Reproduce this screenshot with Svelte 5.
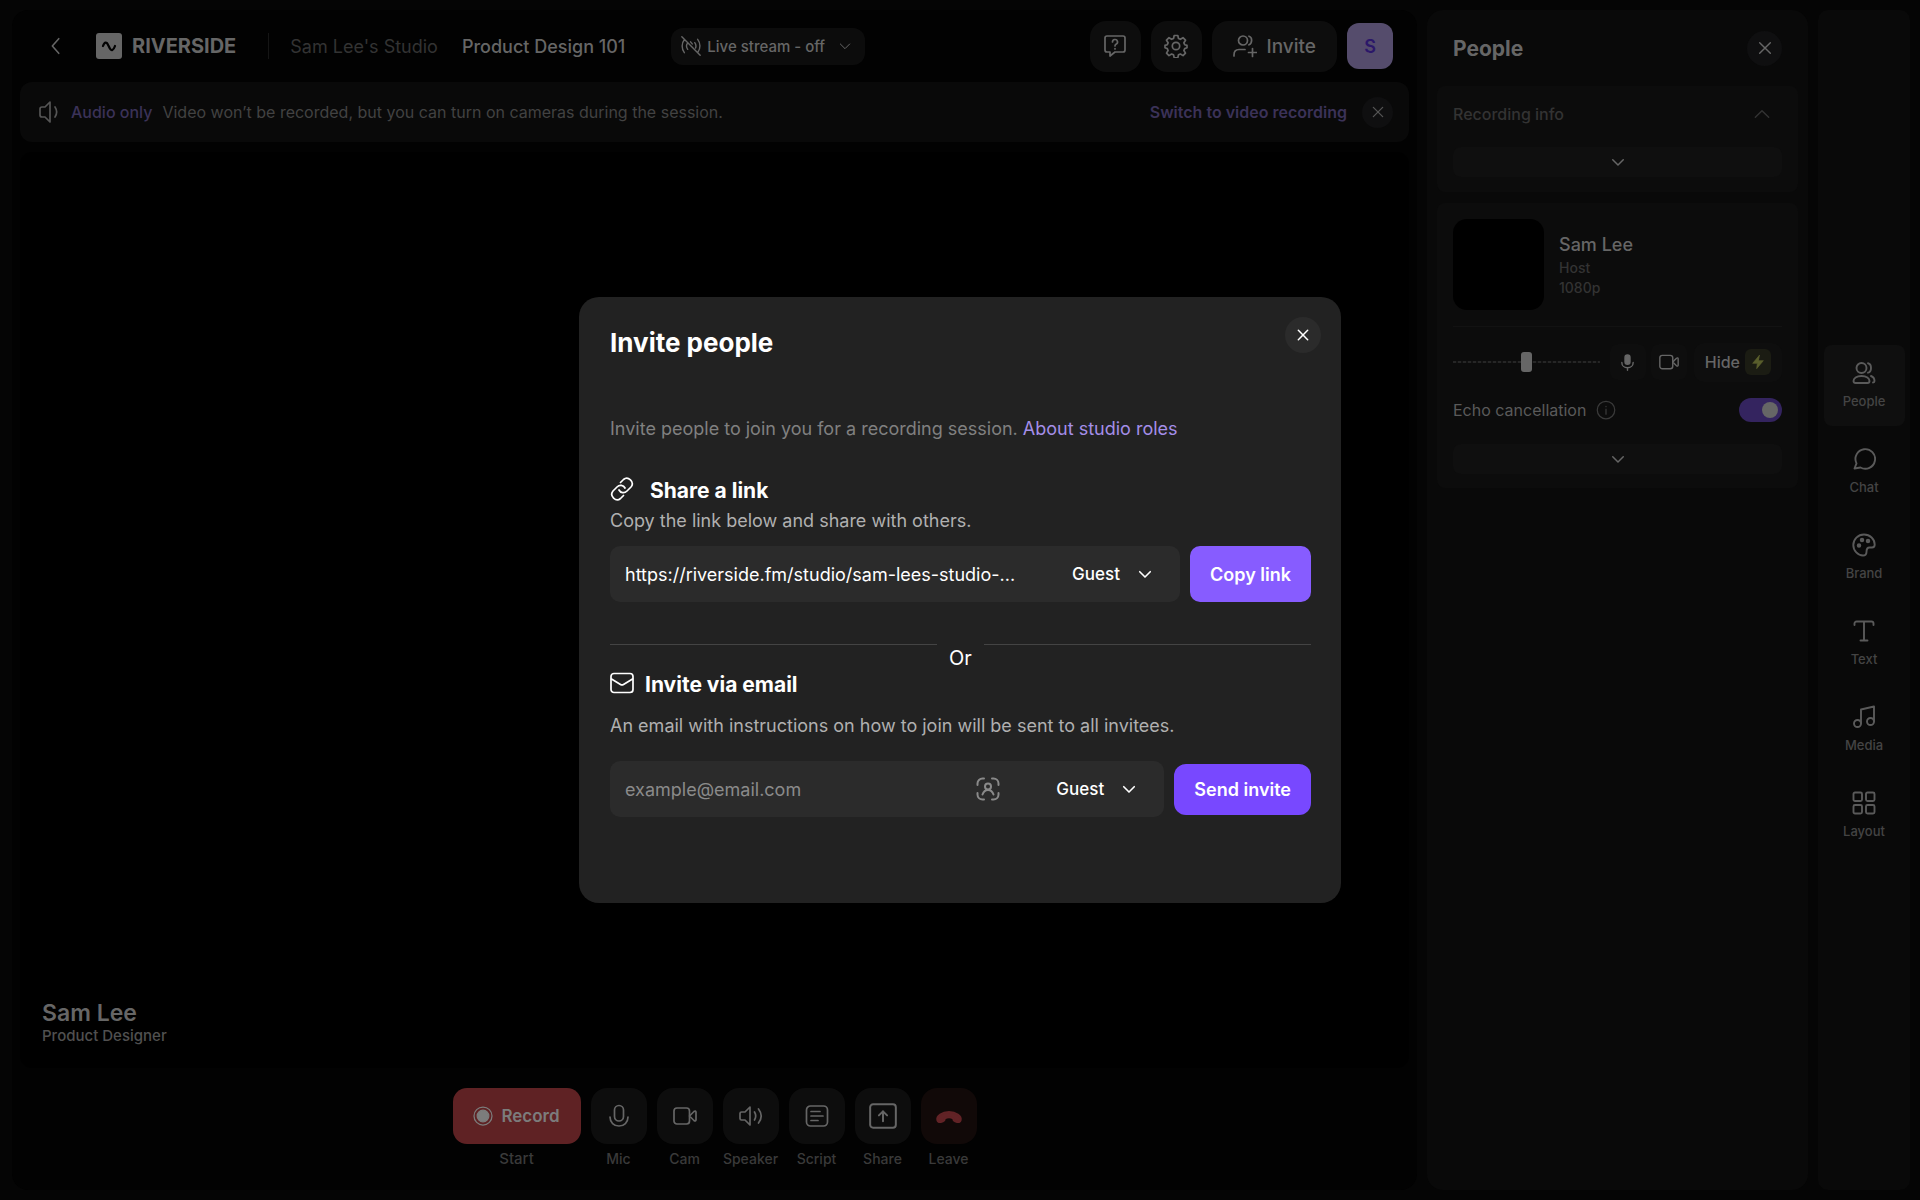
<script>
  const icons = {
    back: `<path d="M15 4l-7 8 7 8"/>`,
    down: `<path d="M5 9l7 7 7-7"/>`,
    up: `<path d="M4 16l8-8 8 8"/>`,
    close: `<path d="M4 4l16 16M20 4L4 20"/>`,
    wave: `<path d="M4 12c2-6 5-6 7-1l2 4c2 4 5 3 7-3"/>`,
    streamOff: `<path d="M1 1l22 22M4 4.500c-3.500 4-3.500 11 0 15.500M20.500 19c3-4 3-10.500-.5-15M8 8.500c-1.700 2-1.700 5 0 7.500M16.500 8c1.500 2 1.700 4.500 1 6.500M11.500 7l2 2.500"/>`,
    help: `<path d="M4 2h16a2 2 0 0 1 2 2v12a2 2 0 0 1-2 2h-8l-5 4v-4H4a2 2 0 0 1-2-2V4a2 2 0 0 1 2-2z"/><path d="M9.500 8a2.500 2.500 0 1 1 3.500 2.300c-.7.4-1 .8-1 1.700"/><path d="M12 14.500v.5"/>`,
    gear: `<circle cx="12" cy="12" r="3.700"/><path d="M10.200 1.500h3.600l.7 3 1.900.8 2.600-1.600 2.500 2.500-1.600 2.600.8 1.900 2.300.7v2.400l-2.300.8-.8 1.900 1.600 2.600-2.500 2.500-2.600-1.600-1.900.8-.7 3h-3.600l-.7-3-1.900-.8L5 21.600l-2.500-2.500 1.600-2.600-.8-1.900-2.300-.8v-2.400l2.300-.7.8-1.900L2.500 6.200 5 3.700l2.600 1.600 1.900-.8z"/>`,
    invite: `<circle cx="10" cy="6.500" r="4.500"/><path d="M16 2.200c3.500 1 3.500 7 0 8.600M1 22v-1c0-3.500 2-5.500 5-5.500h6M19.500 14.500v8M15.500 18.500h8"/>`,
    people: `<circle cx="9.500" cy="7" r="5"/><path d="M16 2.300c4 .8 4 8.400 0 9.400M1.500 20c0-2.500 3-5 8-5s8 2.500 8 5c0 1.500-.8 2-2 2h-12c-1.200 0-2-.5-2-2zM19 15c2.500 1 3.500 3 3.500 5 0 1-.5 1.500-1.500 1.500"/>`,
    chat: `<path d="M2.500 21.500l2-5.200A9.800 9.800 0 1 1 8.500 20.500z"/>`,
    brand: `<path d="M12 1.500C6 1.500 1.300 6.200 1.300 12S6 22.500 11 22.500c2.500 0 3.500-1.500 3.500-3.500 0-3 .5-4.500 3-4.500h2.500c2 0 2.700-1 2.700-3C22.700 6 18 1.500 12 1.500z"/><circle cx="7" cy="12.500" r="1.300" fill="currentColor"/><circle cx="10" cy="7" r="1.300" fill="currentColor"/><circle cx="16" cy="8" r="1.300" fill="currentColor"/>`,
    text: `<path d="M2.500 6V4.500A2 2 0 0 1 4.500 2.500h15a2 2 0 0 1 2 2V6M12 2.500v19M8.500 21.500h7"/>`,
    media: `<circle cx="5.500" cy="18.500" r="3.500"/><circle cx="18.500" cy="16.500" r="3.500"/><path d="M9 18.500V4.500L22 1.500v15"/>`,
    layout: `<rect x="1.500" y="1.500" width="8.500" height="8.500" rx="1.500"/><rect x="14" y="1.500" width="8.500" height="8.500" rx="1.500"/><rect x="1.500" y="14" width="8.500" height="8.500" rx="1.500"/><rect x="14" y="14" width="8.500" height="8.500" rx="1.500"/>`,
    volume: `<path d="M12 2L7 7H4a2 2 0 0 0-2 2v6a2 2 0 0 0 2 2h3l5 5zM17 7c2 3 2 7 0 10"/>`,
    mic: `<rect x="7.500" y="1.500" width="9" height="15.500" rx="4.500"/><path d="M3 13c0 5.500 4 9 9 9s9-3.500 9-9"/>`,
    micSmall: `<rect x="8.500" y="1.500" width="7" height="13" rx="3.500" fill="currentColor"/><path d="M4 12c0 4.500 3.500 7.500 8 7.500s8-3 8-7.500M12 19.500V23"/>`,
    cam: `<rect x="1" y="4" width="15.500" height="16" rx="3"/><path d="M16.500 12l4.500-4.500c1-.8 2-.5 2 .8v7.400c0 1.300-1 1.600-2 .8z"/>`,
    speaker: `<path d="M11 3L6 8H2.500a1.500 1.500 0 0 0-1.500 1.500v5A1.500 1.500 0 0 0 2.500 16H6l5 5zM15.500 8c1.500 2.500 1.500 5.500 0 8M19.500 5c3.500 4.500 3.500 9.500 0 14"/>`,
    script: `<rect x="1.500" y="2" width="21" height="20" rx="4"/><path d="M6 7.500h9M6 12h12M6 16.500h7"/>`,
    share: `<rect x="1" y="2" width="22" height="20" rx="2.500"/><path d="M12 16.500V8M8.500 11.500L12 8l3.500 3.500"/>`,
    leave: `<path d="M2 15.500c-.8-3.500 4-7 10-7s10.800 3.500 10 7c-.3 1.600-1.500 2-3 1.600l-1.800-.5c-1.200-.4-1.500-1-1.700-2.600-2-1-5-1-7 0-.2 1.600-.5 2.200-1.700 2.600L5 17.100c-1.500.4-2.700 0-3-1.600z" fill="currentColor"/>`,
    record: `<circle cx="12" cy="12" r="10.800"/><circle cx="12" cy="12" r="7" fill="currentColor"/>`,
    info: `<circle cx="12" cy="12" r="10.500"/><path d="M12 11v6M12 7.500V8"/>`,
    bolt: `<path d="M14 2L4 14h7l-1 8 10-12h-7z" fill="currentColor"/>`,
    link: `<path d="M10.500 5.500l3-3c4.500-4 11.500 2.500 7.500 7.500l-4 4c-2.500 2.500-6.500 2-8-1"/><path d="M13.500 18.500l-3 3C6 25.500-1 19 3 14l4-4c2.500-2.500 6.500-2 8 1"/>`,
    mail: `<rect x="1" y="2.500" width="22" height="19" rx="3"/><path d="M1.500 8l9 5.500c1 .6 2 .6 3 0l9-5.500"/>`,
    contact: `<path d="M1.500 8V6.500a5 5 0 0 1 5-5H8M16 1.500h1.500a5 5 0 0 1 5 5V8M22.500 16v1.500a5 5 0 0 1-5 5H16M8 22.500H6.500a5 5 0 0 1-5-5V16"/><circle cx="12" cy="9.500" r="3"/><path d="M6.500 17.500c1-3 3-4.500 5.500-4.500s4.500 1.500 5.500 4.500"/>`,
  };

  const controls = [
    { label: "Mic", icon: "mic" },
    { label: "Cam", icon: "cam" },
    { label: "Speaker", icon: "speaker" },
    { label: "Script", icon: "script" },
    { label: "Share", icon: "share", large: true },
    { label: "Leave", icon: "leave", large: true, danger: true },
  ];

  const tabs = [
    { label: "People", icon: "people" },
    { label: "Chat", icon: "chat" },
    { label: "Brand", icon: "brand" },
    { label: "Text", icon: "text" },
    { label: "Media", icon: "media" },
    { label: "Layout", icon: "layout" },
  ];

  let activeTab = "People";
  let inviteOpen = true;
  let echoCancellation = true;
  let volume = 50;
  let linkRole = "Guest";
  let emailRole = "Guest";
  let email = "";
  const studioLink = "https://riverside.fm/studio/sam-lees-studio-...";

  function copyLink() {
    navigator.clipboard.writeText(studioLink);
  }
</script>

{#snippet icon(name, size, stroke = 1.7)}
  <svg
    width={size}
    height={size}
    viewBox="0 0 24 24"
    fill="none"
    stroke="currentColor"
    stroke-width={stroke}
    stroke-linecap="round"
    stroke-linejoin="round"
    aria-hidden="true">{@html icons[name]}</svg
  >
{/snippet}

<div class="page">
  <main class="studio">
    <header class="topbar">
      <button class="plain back" aria-label="Back">{@render icon("back", 22)}</button>
      <a class="logo" href="/">
        <span class="logo-mark">{@render icon("wave", 18, 3)}</span>
        RIVERSIDE
      </a>
      <a class="studio-name" href="/studio">Sam Lee's Studio</a>
      <h1>Product Design 101</h1>
      <button class="stream">
        {@render icon("streamOff", 20)}
        <span>Live stream - off</span>
        {@render icon("down", 16, 1.5)}
      </button>
      <div class="top-actions">
        <button class="square" aria-label="Help">{@render icon("help", 24)}</button>
        <button class="square" aria-label="Settings">{@render icon("gear", 24)}</button>
        <button class="invite" on:click={() => (inviteOpen = true)}>
          {@render icon("invite", 24)}
          Invite
        </button>
        <button class="avatar">S</button>
      </div>
    </header>

    <div class="banner">
      {@render icon("volume", 24)}
      <strong>Audio only</strong>
      <span>Video won’t be recorded, but you can turn on cameras during the session.</span>
      <a href="/video">Switch to video recording</a>
      <button class="round" aria-label="Dismiss">{@render icon("close", 14, 2.2)}</button>
    </div>

    <section class="stage">
      <h2>Sam Lee</h2>
      <p>Product Designer</p>
    </section>

    <footer class="controls">
      <div class="control">
        <button class="record" id="record">{@render icon("record", 20, 1.5)} Record</button>
        <label class="start" for="record">Start</label>
      </div>
      {#each controls as control}
        <div class="control">
          <button class="tool" class:danger={control.danger} id={control.icon}>
            {@render icon(control.icon, control.large ? 28 : 24)}
          </button>
          <label for={control.icon}>{control.label}</label>
        </div>
      {/each}
    </footer>
  </main>

  <aside class="panel">
    <div class="panel-head">
      <h2>People</h2>
      <button class="round large" aria-label="Close">{@render icon("close", 16, 2.2)}</button>
    </div>

    <section class="card info">
      <button class="plain info-head">
        Recording info
        {@render icon("up", 20)}
      </button>
      <button class="expand" aria-label="Show more">{@render icon("down", 18, 2)}</button>
    </section>

    <section class="card person">
      <div class="profile">
        <div class="thumb"></div>
        <div>
          <h3>Sam Lee</h3>
          <p>Host</p>
          <p>1080p</p>
        </div>
      </div>
      <div class="levels">
        <input type="range" min="0" max="100" bind:value={volume} aria-label="Volume" />
        <button class="small" aria-label="Mute">{@render icon("micSmall", 17, 2)}</button>
        <button class="small" aria-label="Camera">{@render icon("cam", 20)}</button>
        <button class="hide">
          Hide
          <span class="bolt">{@render icon("bolt", 16, 1)}</span>
        </button>
      </div>
      <div class="echo">
        <label for="echo">Echo cancellation</label>
        {@render icon("info", 20, 1.5)}
        <input id="echo" type="checkbox" bind:checked={echoCancellation} />
      </div>
      <button class="expand" aria-label="Show more">{@render icon("down", 18, 2)}</button>
    </section>
  </aside>

  <nav class="rail">
    {#each tabs as tab}
      <button class:active={tab.label === activeTab} on:click={() => (activeTab = tab.label)}>
        {@render icon(tab.icon, 24, 1.9)}
        {tab.label}
      </button>
    {/each}
  </nav>
</div>

{#if inviteOpen}
  <div class="backdrop">
    <div class="modal" role="dialog" aria-modal="true" aria-labelledby="modal-title">
      <div class="modal-head">
        <h2 id="modal-title">Invite people</h2>
        <button aria-label="Close" on:click={() => (inviteOpen = false)}>
          {@render icon("close", 14, 2.6)}
        </button>
      </div>

      <p class="intro">
        Invite people to join you for a recording session.
        <a href="/roles">About studio roles</a>
      </p>

      <h3 class="share-title">{@render icon("link", 24)} Share a link</h3>
      <p>Copy the link below and share with others.</p>
      <div class="row">
        <div class="field">
          <input type="text" readonly value={studioLink} aria-label="Studio link" />
          <div class="role">
            <select bind:value={linkRole} aria-label="Role for link">
              <option>Guest</option>
              <option>Producer</option>
              <option>Audience</option>
            </select>
            {@render icon("down", 18, 2.2)}
          </div>
        </div>
        <button class="copy" on:click={copyLink}>Copy link</button>
      </div>

      <div class="or"><span>Or</span></div>

      <h3 class="email-title">{@render icon("mail", 24)} Invite via email</h3>
      <p>An email with instructions on how to join will be sent to all invitees.</p>
      <div class="row email-row">
        <div class="field">
          <input type="email" placeholder="example@email.com" bind:value={email} aria-label="Email" />
          <button class="plain contact" aria-label="Contacts">{@render icon("contact", 24, 2)}</button>
          <div class="role">
            <select bind:value={emailRole} aria-label="Role for email">
              <option>Guest</option>
              <option>Producer</option>
              <option>Audience</option>
            </select>
            {@render icon("down", 18, 2.2)}
          </div>
        </div>
        <button class="send">Send invite</button>
      </div>
    </div>
  </div>
{/if}

<style>
  :global(body) {
    background: #050505;
  }
  h1,
  h2,
  h3,
  p {
    margin: 0;
  }
  .page,
  .backdrop {
    font-family: Inter, "Liberation Sans", sans-serif;
    box-sizing: border-box;
  }
  .page *,
  .modal * {
    box-sizing: border-box;
  }
  button,
  input,
  select {
    font: inherit;
    color: inherit;
    border: none;
    margin: 0;
    padding: 0;
    outline: none;
  }
  button {
    display: flex;
    align-items: center;
    justify-content: center;
    cursor: pointer;
    flex-shrink: 0;
  }
  svg {
    flex-shrink: 0;
  }
  a {
    color: inherit;
    text-decoration: none;
  }
  .plain {
    background: none;
  }
  .page {
    min-height: 100vh;
    display: grid;
    grid-template-columns: 1fr 381px 92px;
    gap: 10px;
    padding: 10px 10px 10px 12px;
    color: #666;
  }

  /* studio */
  .studio {
    display: flex;
    flex-direction: column;
    padding: 0 8px;
    background: #020202;
    border-radius: 16px;
  }
  .topbar {
    display: flex;
    align-items: center;
    height: 72px;
    padding: 0 16px 0 25px;
  }
  .logo {
    display: flex;
    align-items: center;
    gap: 10px;
    margin-left: 29px;
    padding-right: 32px;
    border-right: 1px solid #151515;
    font-size: 20px;
    line-height: 24px;
    font-weight: 700;
  }
  .logo-mark {
    display: grid;
    place-items: center;
    width: 26px;
    height: 26px;
    border-radius: 3px;
    background: #666;
    color: #020202;
  }
  .studio-name {
    margin-left: 21px;
    font-size: 18px;
    color: #333;
  }
  h1 {
    margin-left: 24px;
    font-size: 18px;
    font-weight: 500;
  }
  .stream {
    gap: 6px;
    height: 37px;
    margin-left: 46px;
    padding: 0 12px 0 10px;
    border-radius: 12px;
    background: #0c0c0c;
    font-size: 15px;
    font-weight: 500;
  }
  .stream span {
    margin-right: 6px;
  }
  .top-actions {
    display: flex;
    align-items: center;
    gap: 10px;
    margin-left: auto;
  }
  .square {
    width: 51px;
    height: 51px;
    border-radius: 16px;
    background: #0d0d0d;
  }
  .invite {
    gap: 10px;
    height: 51px;
    padding: 0 21px;
    border-radius: 16px;
    background: #0d0d0d;
    font-size: 19px;
    font-weight: 500;
  }
  .avatar {
    width: 46px;
    height: 46px;
    border-radius: 12px;
    background: #554c6c;
    color: #2b1769;
    font-size: 18px;
    font-weight: 600;
  }
  .banner {
    display: flex;
    align-items: center;
    height: 60px;
    padding: 0 16px 0 18px;
    border-radius: 12px;
    background: #090909;
    color: #424242;
    font-size: 16px;
  }
  .banner strong {
    margin: 0 10px 0 9px;
    font-weight: 500;
    color: #3b3258;
  }
  .banner a {
    margin-left: auto;
    margin-right: 15px;
    font-weight: 600;
    color: #3b3258;
  }
  .banner svg {
    color: #555;
  }
  .round {
    width: 31px;
    height: 31px;
    border-radius: 50%;
    background: #0f0f10;
  }
  .round.large {
    width: 35px;
    height: 35px;
  }
  .stage {
    flex: 1;
    display: flex;
    flex-direction: column;
    justify-content: flex-end;
    margin-top: 10px;
    padding: 22px;
    border-radius: 12px;
    background: #000;
  }
  .stage h2 {
    font-size: 23px;
    line-height: 26px;
    font-weight: 600;
  }
  .stage p {
    font-size: 15px;
    line-height: 20px;
    font-weight: 500;
    color: #505050;
  }
  .controls {
    display: flex;
    justify-content: center;
    gap: 10px;
    height: 122px;
    padding-top: 20px;
  }
  .control {
    display: flex;
    flex-direction: column;
    align-items: center;
    gap: 5px;
    font-size: 14px;
    line-height: 20px;
    font-weight: 500;
    color: #3a3a3a;
  }
  .start {
    font-size: 15px;
  }
  .record {
    gap: 8px;
    width: 128px;
    height: 56px;
    border-radius: 14px;
    background: #5f2224;
    color: #7c7c7c;
    font-size: 17px;
    font-weight: 600;
  }
  .tool {
    width: 56px;
    height: 56px;
    border-radius: 16px;
    background: #0d0d0d;
    color: #666;
  }
  .tool.danger {
    background: #110908;
    color: #622326;
  }

  /* people panel */
  .panel {
    padding: 0 10px;
    border-radius: 16px;
    background: #090909;
  }
  .panel-head {
    display: flex;
    align-items: center;
    justify-content: space-between;
    height: 76px;
    padding: 0 16px;
  }
  .panel-head h2 {
    font-size: 21px;
    font-weight: 700;
  }
  .card {
    padding: 0 16px;
    border-radius: 8px;
    background: #0c0c0c;
  }
  .info {
    height: 106px;
    margin-bottom: 11px;
  }
  .info-head {
    justify-content: space-between;
    width: 100%;
    height: 56px;
    padding-right: 10px;
    font-size: 16px;
    font-weight: 500;
    color: #333;
  }
  .expand {
    width: 100%;
    height: 30px;
    margin-top: 5px;
    border-radius: 8px;
    background: #0f0f0f;
  }
  .person {
    padding: 16px 16px 14px;
  }
  .profile {
    display: flex;
    align-items: center;
    gap: 15px;
    padding-bottom: 16px;
    border-bottom: 1px solid #121212;
  }
  .thumb {
    width: 91px;
    height: 91px;
    border-radius: 14px;
    background: #000;
  }
  .profile h3 {
    font-size: 18px;
    line-height: 26px;
    font-weight: 500;
  }
  .profile p {
    font-size: 14px;
    line-height: 20px;
    font-weight: 500;
    color: #333;
  }
  .levels {
    display: flex;
    align-items: center;
    height: 70px;
  }
  .levels input {
    appearance: none;
    flex: 1;
    width: 0;
    height: 20px;
    background: repeating-linear-gradient(90deg, #262626 0 3px, #121212 3px 5px) center / 100% 2px no-repeat;
  }
  .levels input::-webkit-slider-thumb {
    appearance: none;
    width: 11px;
    height: 20px;
    border-radius: 3px;
    background: #666;
  }
  .small {
    width: 36px;
    height: 36px;
    margin-left: 5px;
    border-radius: 8px;
    background: #0e0e0e;
  }
  .levels input + .small {
    margin-left: 10px;
  }
  .hide {
    gap: 5px;
    height: 39px;
    margin-left: 7px;
    padding: 0 11px;
    border-radius: 10px;
    background: #0e0e0e;
    font-size: 16px;
    font-weight: 500;
  }
  .bolt {
    display: grid;
    place-items: center;
    width: 26px;
    height: 26px;
    border-radius: 6px;
    background: #1b1c13;
    color: #595e2c;
  }
  .echo {
    display: flex;
    align-items: center;
    gap: 10px;
    height: 26px;
    margin-bottom: 21px;
    font-size: 16px;
    color: #5a5a5a;
  }
  .echo svg {
    color: #3a3a3a;
  }
  .echo input {
    appearance: none;
    display: flex;
    align-items: center;
    width: 43px;
    height: 24px;
    margin-left: auto;
    padding: 4px;
    border-radius: 12px;
    background: #222;
    cursor: pointer;
  }
  .echo input::before {
    content: "";
    width: 16px;
    height: 16px;
    border-radius: 50%;
    background: #666;
  }
  .echo input:checked {
    justify-content: flex-end;
    background: #34245f;
  }

  /* tool rail */
  .rail {
    display: flex;
    flex-direction: column;
    align-items: center;
    justify-content: center;
    gap: 5px;
    border-radius: 10px;
    background: #090909;
  }
  .rail button {
    flex-direction: column;
    gap: 7px;
    width: 81px;
    height: 81px;
    border-radius: 8px;
    background: none;
    font-size: 13px;
    line-height: 18px;
    font-weight: 500;
    color: #444;
  }
  .rail .active {
    background: #0f0f0f;
  }
  .rail svg {
    color: #5a5a5a;
  }

  /* invite dialog */
  .backdrop {
    position: fixed;
    inset: 0;
    display: grid;
    place-items: center;
  }
  .modal {
    width: 762px;
    padding: 20px 30px 86px 31px;
    border-radius: 20px;
    background: #222;
    color: #fff;
    font-size: 18px;
    box-sizing: border-box;
  }
  .modal-head {
    display: flex;
    align-items: flex-start;
    justify-content: space-between;
    margin-right: -10px;
  }
  .modal-head h2 {
    padding-top: 8px;
    font-size: 26px;
    line-height: 36px;
    font-weight: 700;
  }
  .modal-head button {
    width: 36px;
    height: 36px;
    border-radius: 50%;
    background: #2b2b2b;
  }
  .modal p {
    line-height: 24px;
    color: #b0b0b0;
  }
  .modal .intro {
    margin: 56px 0 36px;
    color: #808080;
  }
  .intro a {
    color: #a48ee8;
  }
  .modal h3 {
    display: flex;
    align-items: flex-start;
    font-size: 21px;
    line-height: 28px;
    font-weight: 700;
  }
  .share-title {
    gap: 16px;
    margin-bottom: 4px;
  }
  .email-title {
    gap: 11px;
    margin-bottom: 15px;
  }
  .row {
    display: flex;
    align-items: center;
    gap: 10px;
    margin-top: 13px;
  }
  .email-row {
    margin-top: 23px;
  }
  .field {
    flex: 1;
    display: flex;
    align-items: center;
    height: 56px;
    padding: 0 18px 0 15px;
    border-radius: 10px;
    background: #2b2b2b;
  }
  .field input {
    flex: 1;
    width: 0;
    background: none;
    text-overflow: ellipsis;
  }
  .field input::placeholder {
    color: #8a8a8a;
    opacity: 1;
  }
  .contact {
    margin-right: 56px;
    color: #8a8a8a;
  }
  .role {
    display: grid;
    grid-template-columns: 1fr 26px;
    align-items: center;
  }
  .role select {
    grid-area: 1 / 1 / 2 / 3;
    appearance: none;
    width: 90px;
    background: none;
    font-size: 17px;
    font-weight: 500;
  }
  .role svg {
    grid-area: 1 / 2;
    pointer-events: none;
  }
  .copy,
  .send {
    padding: 0 20px;
    border-radius: 10px;
    font-weight: 600;
  }
  .copy {
    height: 56px;
    background: #875cff;
  }
  .send {
    height: 51px;
    border-radius: 12px;
    background: #7848ff;
  }
  .or {
    display: grid;
    grid-template-columns: 1fr auto 1fr;
    height: 27px;
    margin: 42px 0 0;
    font-size: 20px;
    line-height: 28px;
  }
  .or::before,
  .or::after {
    content: "";
    border-top: 1px solid #444;
  }
  .or span {
    padding: 0 12px;
  }
</style>
